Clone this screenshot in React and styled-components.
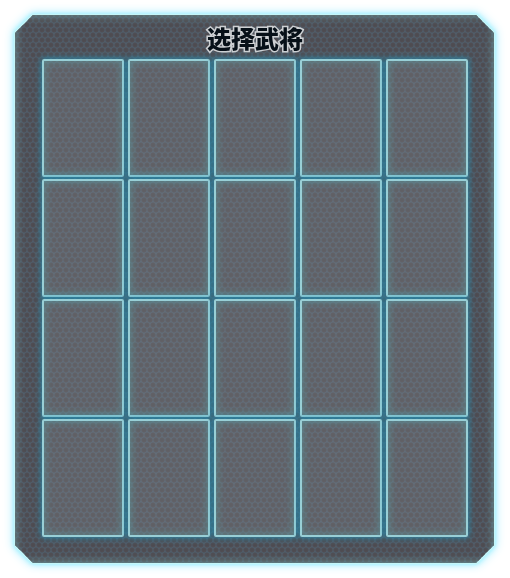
import React from 'react';
import styled, { createGlobalStyle, css } from 'styled-components';

const GlobalStyle = createGlobalStyle`
  *, *::before { box-sizing: border-box; }
  body {
    margin: 0;
    background: #ffffff;
    font-family: "Noto Sans CJK SC", sans-serif;
  }
`;

const CUT = 18;

const bevel = css`
  clip-path: polygon(
    ${CUT}px 0, calc(100% - ${CUT}px) 0, 100% ${CUT}px,
    100% calc(100% - ${CUT}px), calc(100% - ${CUT}px) 100%,
    ${CUT}px 100%, 0 calc(100% - ${CUT}px), 0 ${CUT}px
  );
`;

const Page = styled.main`
  padding: 14px 15px 14px 14px;
`;

const Glow = styled.div`
  filter: drop-shadow(0 0 2px #9cf1ff) drop-shadow(0 0 5px #a4eeff);
`;

const Edge = styled.div`
  ${bevel}
  padding: 1px;
  background: #c4f6f8;
`;

const Surface = styled.section`
  ${bevel}
  padding: 8px 26px 26px 27px;
  background-color: #505e6b;
  background-image:
    radial-gradient(circle at 3px 5px, #4e4c51 1px, #504e54 2px, transparent 3px),
    radial-gradient(circle at 3px 5px, #4e4c51 1px, #504e54 2px, transparent 3px);
  background-size: 6px 10px;
  background-position: 0 0, 3px 5px;
  box-shadow: inset 0 0 9px 1px rgba(116, 169, 170, 0.7);
`;

const Title = styled.h1`
  margin: 0 0 6px;
  color: #071018;
  font-size: 24px;
  font-weight: 900;
  line-height: 30px;
  text-align: center;
  -webkit-text-stroke: 3px #cdd0d3;
  paint-order: stroke fill;
`;

const Slots = styled.div`
  display: grid;
  grid-template-columns: repeat(5, 1fr);
  gap: 2px 4px;
`;

const Slot = styled.button`
  display: block;
  width: 100%;
  aspect-ratio: 82 / 118;
  padding: 0;
  border: 2px solid #98cfd6;
  border-radius: 2px;
  background: rgba(164, 170, 174, 0.22);
  box-shadow:
    0 0 6px 1px rgba(34, 146, 184, 0.8),
    inset 0 0 9px 1px rgba(92, 158, 164, 0.6);
  cursor: pointer;
`;

const slots = Array.from({ length: 20 }, (_, i) => i + 1);

export default function App() {
  return (
    <>
      <GlobalStyle />
      <Page>
        <Glow>
          <Edge>
            <Surface aria-labelledby="title">
              <Title id="title">选择武将</Title>
              <Slots>
                {slots.map((n) => (
                  <Slot key={n} type="button" aria-label={`武将 ${n}`} />
                ))}
              </Slots>
            </Surface>
          </Edge>
        </Glow>
      </Page>
    </>
  );
}
